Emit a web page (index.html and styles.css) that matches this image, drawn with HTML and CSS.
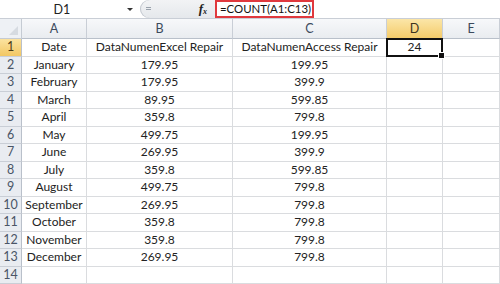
FILE: index.html
```html
<!DOCTYPE html>
<html>
<head>
<meta charset="utf-8">
<link rel="stylesheet" href="styles.css">
</head>
<body>
<div class="app">
  <div class="fbar">
    <div class="namebox"><span class="name">D1</span><span class="arrow"></span></div>
    <div class="formula-area">
      <div class="fx"><i>f</i><sub>x</sub></div>
      <div class="formula">=COUNT(A1:C13)</div>
    </div>
  </div>
  <div class="sheet">
    <div class="corner"><span class="tri"></span></div>
    <div class="ch">A</div><div class="ch">B</div><div class="ch">C</div><div class="ch sel">D</div><div class="ch">E</div>

    <div class="rh sel">1</div><div class="c">Date</div><div class="c">DataNumenExcel Repair</div><div class="c">DataNumenAccess Repair</div><div class="c active">24<span class="handle"></span></div><div class="c"></div>
    <div class="rh">2</div><div class="c">January</div><div class="c">179.95</div><div class="c">199.95</div><div class="c"></div><div class="c"></div>
    <div class="rh">3</div><div class="c">February</div><div class="c">179.95</div><div class="c">399.9</div><div class="c"></div><div class="c"></div>
    <div class="rh">4</div><div class="c">March</div><div class="c">89.95</div><div class="c">599.85</div><div class="c"></div><div class="c"></div>
    <div class="rh">5</div><div class="c">April</div><div class="c">359.8</div><div class="c">799.8</div><div class="c"></div><div class="c"></div>
    <div class="rh">6</div><div class="c">May</div><div class="c">499.75</div><div class="c">199.95</div><div class="c"></div><div class="c"></div>
    <div class="rh">7</div><div class="c">June</div><div class="c">269.95</div><div class="c">399.9</div><div class="c"></div><div class="c"></div>
    <div class="rh">8</div><div class="c">July</div><div class="c">359.8</div><div class="c">599.85</div><div class="c"></div><div class="c"></div>
    <div class="rh">9</div><div class="c">August</div><div class="c">499.75</div><div class="c">799.8</div><div class="c"></div><div class="c"></div>
    <div class="rh">10</div><div class="c">September</div><div class="c">269.95</div><div class="c">799.8</div><div class="c"></div><div class="c"></div>
    <div class="rh">11</div><div class="c">October</div><div class="c">359.8</div><div class="c">799.8</div><div class="c"></div><div class="c"></div>
    <div class="rh">12</div><div class="c">November</div><div class="c">359.8</div><div class="c">799.8</div><div class="c"></div><div class="c"></div>
    <div class="rh">13</div><div class="c">December</div><div class="c">269.95</div><div class="c">799.8</div><div class="c"></div><div class="c"></div>
    <div class="rh">14</div><div class="c"></div><div class="c"></div><div class="c"></div><div class="c"></div><div class="c"></div>
  </div>
</div>
</body>
</html>
```
FILE: styles.css
```css
html, body {
  margin: 0;
  padding: 0;
  background: #fff;
}
.app {
  width: 500px;
  height: 284px;
  overflow: hidden;
  font-family: Lato, "Open Sans", "Liberation Sans", sans-serif;
  font-size: 12px;
  color: #222;
}
.fbar {
  height: 19px;
  display: flex;
  border-bottom: 1px solid #c9ced6;
  box-sizing: border-box;
  background: #fff;
}
.namebox {
  width: 140px;
  display: flex;
  align-items: center;
}
.name {
  width: 124px;
  text-align: center;
  font-size: 12.5px;
}
.arrow {
  width: 0;
  height: 0;
  border-left: 3px solid transparent;
  border-right: 3px solid transparent;
  border-top: 3px solid #333;
  margin-left: 3px;
  margin-top: 1px;
}
.formula-area {
  flex: 1;
  display: flex;
  align-items: stretch;
}
.fx {
  width: 75px;
  flex: none;
  background: linear-gradient(#f2f3f5, #e5e8ec);
  border-radius: 9px 0 0 9px;
  box-shadow: inset 1px 0 0 #c4c9d0;
  position: relative;
  text-align: right;
  padding-right: 8px;
  box-sizing: border-box;
  font-family: "Liberation Serif", serif;
  font-size: 13px;
  color: #222;
  line-height: 18px;
}
.fx::before {
  content: "";
  position: absolute;
  left: 6px;
  top: 7px;
  width: 5px;
  height: 1px;
  background: #9aa2ac;
  box-shadow: 0 2px 0 #9aa2ac;
}
.fx i {
  font-weight: bold;
}
.fx sub {
  font-size: 8px;
  font-style: italic;
  font-weight: bold;
  vertical-align: -1px;
}
.formula {
  width: 99px;
  flex: none;
  box-sizing: border-box;
  border: 2px solid #e0393e;
  padding-left: 3px;
  line-height: 14px;
  font-size: 11.4px;
  color: #111;
  white-space: nowrap;
  height: 18px;
}
.sheet {
  display: grid;
  grid-template-columns: 22px 65px 146px 154px 56px 57px;
  grid-template-rows: 20px repeat(14, 17.5px);
}
.corner {
  background: #eef1f5;
  border-right: 1px solid #c5cbd3;
  border-bottom: 1px solid #c5cbd3;
  box-sizing: border-box;
  position: relative;
}
.tri {
  position: absolute;
  right: 3px;
  bottom: 3px;
  width: 0;
  height: 0;
  border-left: 9px solid transparent;
  border-bottom: 9px solid #d6dbe1;
}
.ch {
  background: linear-gradient(#f7f8fa, #e9ecf0);
  border-right: 1px solid #c9ced6;
  border-bottom: 1px solid #b9c0ca;
  box-sizing: border-box;
  text-align: center;
  line-height: 19px;
  color: #3c4a5c;
  font-size: 12.5px;
}
.ch.sel {
  background: linear-gradient(#fbe6a8, #f4cb6a);
  border-bottom: 1px solid #d5a84a;
  color: #3c3420;
}
.rh {
  background: #e9ecf1;
  border-right: 1px solid #b9c0ca;
  border-bottom: 1px solid #c9ced6;
  box-sizing: border-box;
  text-align: center;
  line-height: 16.5px;
  color: #4a5566;
  font-size: 12.5px;
}
.rh.sel {
  background: linear-gradient(#fbe3a0, #f3c763);
  color: #4a3a16;
}
.c {
  border-right: 1px solid #dadcdf;
  border-bottom: 1px solid #dadcdf;
  box-sizing: border-box;
  text-align: center;
  line-height: 16.5px;
  white-space: nowrap;
  overflow: hidden;
}
.c.active {
  border: 2px solid #111;
  line-height: 13.5px;
  margin: -1px 0 0 -1px;
  position: relative;
  overflow: visible;
}
.handle {
  position: absolute;
  right: -4px;
  bottom: -4px;
  width: 5px;
  height: 5px;
  background: #111;
  border: 1px solid #fff;
}
```
